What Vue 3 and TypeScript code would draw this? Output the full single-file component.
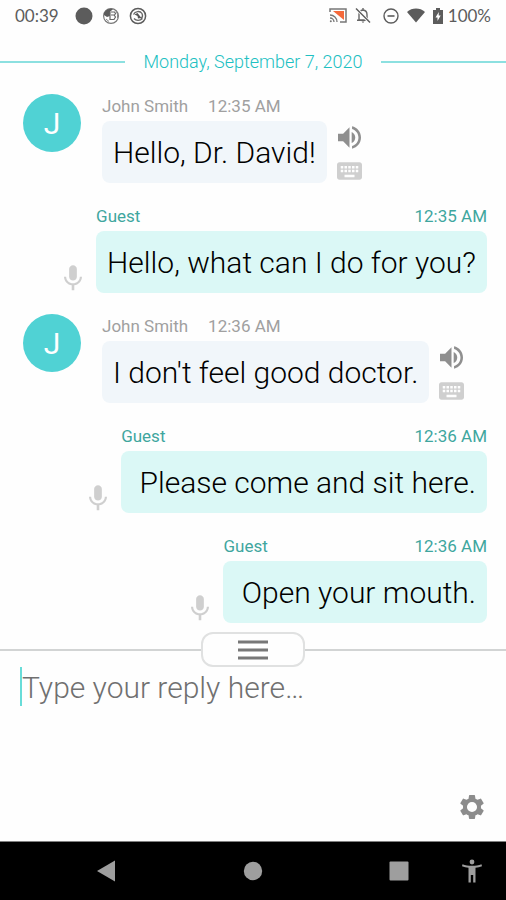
<script setup lang="ts">
import { ref } from 'vue'

interface Message {
  id: number
  author: string
  time: string
  text: string
  incoming: boolean
}

const messages: Message[] = [
  { id: 1, author: 'John Smith', time: '12:35 AM', text: 'Hello, Dr. David!', incoming: true },
  { id: 2, author: 'Guest', time: '12:35 AM', text: 'Hello, what can I do for you?', incoming: false },
  { id: 3, author: 'John Smith', time: '12:36 AM', text: "I don't feel good doctor.", incoming: true },
  { id: 4, author: 'Guest', time: '12:36 AM', text: ' Please come and sit here.', incoming: false },
  { id: 5, author: 'Guest', time: '12:36 AM', text: ' Open your mouth.', incoming: false },
]

const reply = ref('')
</script>

<template>
  <div class="screen">
    <header class="status">
      <div class="status-group">
        <span class="clock">00:39</span>
        <svg class="dot-icon" viewBox="0 0 18 18"><circle cx="9" cy="9" r="8.500" fill="#5c5c5c" /></svg>
        <svg class="dot-icon" viewBox="0 0 18 18">
          <circle cx="9" cy="9" r="7.400" fill="#fff" stroke="#777" stroke-width="1.200" />
          <path d="M2 6C4 2 8 1 11 2L8 5v4L5 10 2 8z" fill="#5c5c5c" />
          <path d="M9 5h3.500l1 1.500-1 1.500H9m3 0 1.500 2-1.500 2.500H8M8 5v8" fill="none" stroke="#666" stroke-width="1.200" />
          <path d="M4 12l3 2.500M14 4l1.500 3v4" fill="none" stroke="#888" />
        </svg>
        <svg class="dot-icon" viewBox="0 0 18 18">
          <circle cx="9" cy="9" r="7.600" fill="none" stroke="#5c5c5c" stroke-width="1.500" />
          <path d="M4.500 7.500C6 4 11 3.500 13 6.500c1 2 .5 4-1 5.500M13.500 11.500C11 14 7 14 5 11.500" fill="none" stroke="#666" stroke-width="1.300" />
          <path d="M5.500 7.500l3-1.500 4 5-3.500.5L8.500 9z" fill="#555" />
        </svg>
      </div>
      <div class="status-group status-right">
        <svg class="cast" viewBox="0 0 18 15">
          <path d="M1 4V1h16v13h-6" fill="none" stroke="#777" stroke-width="1.500" />
          <path d="M4 3h11v9z" fill="#f4683a" />
          <path d="M1 7a7 7 0 0 1 7 7M1 10a4 4 0 0 1 4 4" fill="none" stroke="#777" stroke-width="1.300" />
          <circle cx="1.800" cy="13.200" r="1" fill="#777" />
        </svg>
        <svg class="bell" viewBox="0 0 16 17">
          <path d="M4 13V7.500C4 5 5.500 3.300 8 3c2.500.3 4 2 4 4.500V13zM2 13.300h12M8 1v2" fill="none" stroke="#666" stroke-width="1.400" />
          <path d="M6.500 14.500h3L8 16z" fill="#666" />
          <path d="M1.500 1.500l13 14" stroke="#fff" stroke-width="3" />
          <path d="M1 1.500l14 14" stroke="#5c5c5c" stroke-width="1.400" />
        </svg>
        <svg class="dnd" viewBox="0 0 16 16">
          <circle cx="8" cy="8" r="7" fill="none" stroke="#5c5c5c" stroke-width="1.400" />
          <path d="M4.500 8h7" stroke="#5c5c5c" stroke-width="1.600" />
        </svg>
        <svg class="wifi" viewBox="0 0 18 15"><path d="M0 4C5-.6 13-.6 18 4L9 14.500z" fill="#5c5c5c" /></svg>
        <svg class="battery" viewBox="0 0 10 16">
          <path d="M3 0h4v2h3v14H0V2h3z" fill="#5c5c5c" />
          <path d="M5.800 4L2.500 9.500h2V13l3.200-5.500h-2z" fill="#fff" />
        </svg>
        <span class="percent">100%</span>
      </div>
    </header>

    <main class="chat">
      <div class="date">Monday, September 7, 2020</div>

      <article
        v-for="message in messages"
        :key="message.id"
        class="message"
        :class="message.incoming ? 'incoming' : 'outgoing'"
      >
        <div v-if="message.incoming" class="avatar">{{ message.author.charAt(0) }}</div>
        <svg v-else class="mic" viewBox="5 2 14 20">
          <path d="M12 14c1.660 0 3-1.340 3-3V5c0-1.660-1.340-3-3-3S9 3.340 9 5v6c0 1.660 1.340 3 3 3z" />
          <path d="M17.300 11c0 3-2.540 5.100-5.300 5.100S6.700 14 6.700 11H5c0 3.410 2.720 6.230 6 6.720V21.500h2v-3.780c3.280-.48 6-3.300 6-6.720z" />
        </svg>
        <div class="stack">
          <div class="meta">
            <span>{{ message.author }}</span>
            <time>{{ message.time }}</time>
          </div>
          <p class="bubble">{{ message.text }}</p>
        </div>
        <div v-if="message.incoming" class="tools">
          <button type="button" class="tool" aria-label="Play message">
            <svg class="speaker" viewBox="3 3 18 18">
              <path d="M3 9v6h4l5 5V4L7 9zM13.700 7.600v8.800c1.700-.7 2.800-2.400 2.800-4.400s-1.100-3.700-2.800-4.400zM14 3.230v2.060c2.890.86 5 3.540 5 6.710s-2.110 5.850-5 6.710v2.060c4.010-.91 7-4.490 7-8.770s-2.990-7.860-7-8.770z" />
            </svg>
          </button>
          <button type="button" class="tool" aria-label="Typed message">
            <svg class="keyboard" viewBox="2 5 20 14">
              <path d="M20 5H4c-1.100 0-1.990.9-1.990 2L2 17c0 1.100.9 2 2 2h16c1.100 0 2-.9 2-2V7c0-1.100-.9-2-2-2zm-9 3h2v2h-2V8zm0 3h2v2h-2v-2zM8 8h2v2H8V8zm0 3h2v2H8v-2zm-1 2H5v-2h2v2zm0-3H5V8h2v2zm9 7H8v-2h8v2zm0-4h-2v-2h2v2zm0-3h-2V8h2v2zm3 3h-2v-2h2v2zm0-3h-2V8h2v2z" />
            </svg>
          </button>
        </div>
      </article>
    </main>

    <section class="composer">
      <div class="divider">
        <button type="button" class="handle" aria-label="Resize reply area">
          <svg class="bars" viewBox="0 0 30 20">
            <path d="M0 2h30M0 10h30M0 18h30" stroke="#777" stroke-width="3" />
          </svg>
        </button>
      </div>
      <div class="field">
        <span class="caret"></span>
        <textarea v-model="reply" class="reply" rows="1" placeholder="Type your reply here…" aria-label="Reply"></textarea>
      </div>
      <button type="button" class="settings" aria-label="Settings">
        <svg class="gear" viewBox="2 2 20 20">
          <path d="M19.430 12.980c.04-.32.07-.64.07-.98s-.03-.66-.07-.98l2.110-1.650c.19-.15.24-.42.12-.64l-2-3.460c-.12-.22-.39-.3-.61-.22l-2.490 1c-.52-.4-1.080-.73-1.690-.98l-.38-2.650C14.460 2.180 14.250 2 14 2h-4c-.25 0-.46.18-.49.42l-.38 2.650c-.61.25-1.170.59-1.690.98l-2.490-1c-.23-.09-.49 0-.61.22l-2 3.460c-.13.22-.07.49.12.64l2.110 1.650c-.04.32-.07.65-.07.98s.03.66.07.98l-2.110 1.650c-.19.15-.24.42-.12.64l2 3.460c.12.22.39.3.61.22l2.490-1c.52.4 1.080.73 1.690.98l.38 2.650c.03.24.24.42.49.42h4c.25 0 .46-.18.49-.42l.38-2.650c.61-.25 1.170-.59 1.690-.98l2.490 1c.23.09.49 0 .61-.22l2-3.460c.12-.22.07-.49-.12-.64zM12 16.200a4.200 4.200 0 1 1 0-8.400 4.200 4.200 0 0 1 0 8.400z" />
        </svg>
      </button>
    </section>

    <nav class="navbar" aria-label="System navigation">
      <button type="button" class="nav-button back" aria-label="Back">
        <svg class="nav-icon" viewBox="0 0 24 24"><path d="M3 12L21 1.500v21z" /></svg>
      </button>
      <button type="button" class="nav-button" aria-label="Home">
        <svg class="nav-icon" viewBox="0 0 24 24"><circle cx="12" cy="12" r="9.200" /></svg>
      </button>
      <button type="button" class="nav-button" aria-label="Recent apps">
        <svg class="nav-icon" viewBox="0 0 24 24"><rect x="2.500" y="2.500" width="19" height="19" rx="1" /></svg>
      </button>
      <button type="button" class="nav-button" aria-label="Accessibility">
        <svg class="nav-icon" viewBox="0 0 24 24">
          <circle cx="12" cy="3" r="2.400" />
          <path d="M2.500 5.300C8 7.300 16 7.300 21.500 5.300l.5 2c-2 .8-4.300 1.300-6.500 1.500V23.500h-2.300V16h-2.400v7.500H8.500V8.800C6.300 8.600 4 8.100 2 7.300z" />
        </svg>
      </button>
    </nav>
  </div>
</template>

<style>
body {
  margin: 0;
  background: #fff;
}
</style>

<style scoped>
.screen {
  display: flex;
  flex-direction: column;
  min-height: 100vh;
  font-family: Roboto, "Liberation Sans", sans-serif;
  background: #fefefe;
}

button {
  padding: 0;
  border: 0;
  background: none;
  cursor: pointer;
}

svg {
  display: block;
  flex: none;
}

.status {
  display: flex;
  justify-content: space-between;
  align-items: center;
  height: 31px;
  padding: 0 15px;
  font-family: Lato, sans-serif;
  font-size: 17px;
  color: #5c5c5c;
}

.status-group {
  display: flex;
  align-items: center;
  gap: 9px;
}

.clock {
  margin-right: 7px;
}

.dot-icon {
  width: 18px;
  height: 18px;
}

.status-right {
  gap: 8px;
}

.cast,
.wifi {
  width: 18px;
  height: 15px;
}

.bell {
  width: 16px;
  height: 17px;
}

.dnd {
  width: 16px;
  height: 16px;
  margin-left: 4px;
}

.battery {
  width: 10px;
  height: 16px;
}

.percent {
  margin-left: -3px;
}

.chat {
  display: flex;
  flex-direction: column;
  gap: 21px;
  padding: 20px 0 9px;
}

.date {
  display: flex;
  align-items: center;
  gap: 18px;
  font-size: 18px;
  font-weight: 300;
  line-height: 22px;
  color: #20c0c2;
}

.date::before,
.date::after {
  content: "";
  flex: 1;
  height: 2px;
  background: #8ce0e0;
}

.message {
  display: flex;
  padding: 0 19px 0 23px;
}

.outgoing {
  justify-content: flex-end;
}

.avatar {
  flex: none;
  width: 58px;
  height: 58px;
  margin-right: 21px;
  border-radius: 50%;
  background: #50d2d4;
  color: #fff;
  font-size: 30px;
  line-height: 60px;
  text-align: center;
}

.stack {
  padding-top: 2px;
}

.meta {
  display: flex;
  gap: 20px;
  margin-bottom: 5px;
  font-size: 17px;
  line-height: 20px;
  color: #a0a0a0;
}

.outgoing .meta {
  justify-content: space-between;
  color: #3fa69e;
}

.bubble {
  margin: 0;
  padding: 14px 11px 12px;
  border-radius: 8px;
  background: #f1f6fa;
  color: #000;
  font-size: 30px;
  font-weight: 300;
  line-height: 36px;
  white-space: pre-wrap;
}

.outgoing .bubble {
  background: #dbf8f6;
}

.mic {
  align-self: flex-end;
  width: 18px;
  height: 26px;
  margin: 0 14px 2px 0;
  fill: #cfcfcf;
}

.tools {
  display: flex;
  flex-direction: column;
  align-items: center;
  align-self: flex-end;
  gap: 13px;
  margin: 0 0 3px 10px;
}

.speaker {
  width: 23px;
  height: 23px;
  fill: #8f8f8f;
}

.keyboard {
  width: 25px;
  height: 18px;
  fill: #cfcfcf;
}

.composer {
  display: flex;
  flex: 1;
  flex-direction: column;
}

.divider {
  display: flex;
  align-items: center;
}

.divider::before,
.divider::after {
  content: "";
  flex: 1;
  height: 2px;
  background: #d2d4d4;
}

.handle {
  display: flex;
  align-items: center;
  justify-content: center;
  width: 104px;
  height: 35px;
  border: 2px solid #e0e1e1;
  border-radius: 12px;
  background: #fefefe;
}

.bars {
  width: 30px;
  height: 20px;
}

.field {
  display: flex;
  flex: 1;
  align-items: flex-start;
  padding: 0 20px;
}

.caret {
  width: 2px;
  height: 39px;
  background: #68dcd8;
}

.reply {
  flex: 1;
  align-self: stretch;
  min-width: 0;
  padding: 2px 0 0;
  border: 0;
  outline: 0;
  resize: none;
  background: none;
  color: #151b1d;
  font-family: inherit;
  font-size: 30px;
  font-weight: 300;
  line-height: 38px;
}

.reply::placeholder {
  color: #707070;
  opacity: 1;
}

.settings {
  align-self: flex-end;
  margin: 0 22px 22px 0;
}

.gear {
  width: 24px;
  height: 24px;
  fill: #8c8c8c;
}

.navbar {
  display: grid;
  grid-template-columns: 66px 80px 1fr 78px 68px;
  height: 57px;
  padding-bottom: 1px;
  border-top: 1px solid #808080;
  background: #000;
}

.back {
  grid-column: 2;
}

.nav-button {
  display: flex;
  align-items: center;
  justify-content: center;
}

.nav-icon {
  width: 24px;
  height: 24px;
  fill: #9e9e9e;
}
</style>
